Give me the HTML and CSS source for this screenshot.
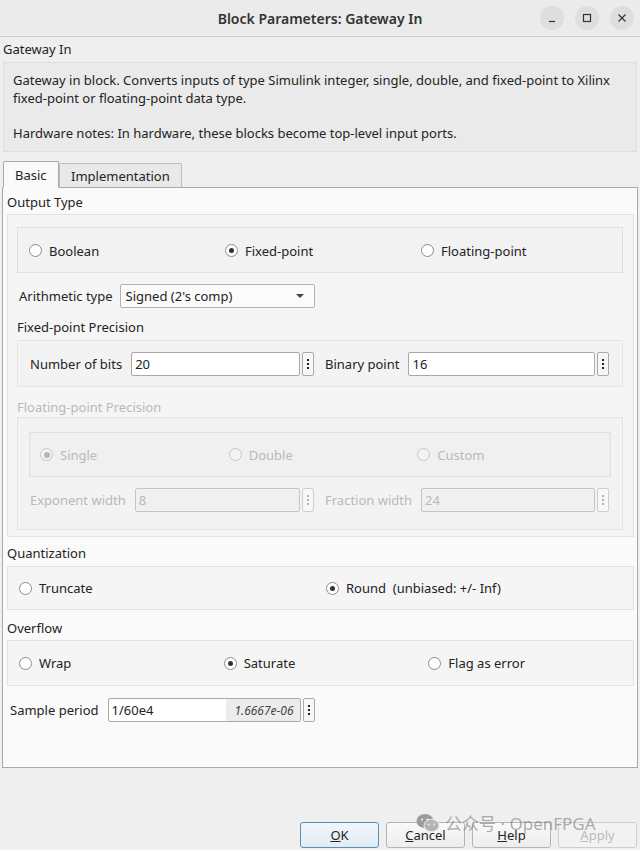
FILE: index.html
```html
<!DOCTYPE html>
<html lang="en">

<head>
    <meta charset="UTF-8">
    <meta name="viewport" content="width=device-width, initial-scale=1.0">
    <title>Block Parameters: Gateway In</title>
    <link rel="stylesheet" href="styles.css">
</head>

<body>
    <div class="window">
        <div class="titlebar">
            <span class="title">Block Parameters: Gateway In</span>
            <div class="wm-buttons">
                <span class="wm-btn">
                    <svg width="10" height="10" viewBox="0 0 10 10"><path d="M2 8.5h6" stroke="#333" stroke-width="1.2"/></svg>
                </span>
                <span class="wm-btn">
                    <svg width="10" height="10" viewBox="0 0 10 10"><rect x="1.5" y="1.5" width="7" height="7" fill="none" stroke="#333" stroke-width="1.2"/></svg>
                </span>
                <span class="wm-btn">
                    <svg width="10" height="10" viewBox="0 0 10 10"><path d="M1.5 1.5l7 7M8.5 1.5l-7 7" stroke="#333" stroke-width="1.2"/></svg>
                </span>
            </div>
        </div>

        <div class="content">
            <div class="block-name">Gateway In</div>
            <div class="description">
                <p>Gateway in block. Converts inputs of type Simulink integer, single, double, and fixed-point to Xilinx fixed-point or floating-point data type.</p>
                <p>Hardware notes: In hardware, these blocks become top-level input ports.</p>
            </div>

            <div class="tabs">
                <span class="tab active">Basic</span>
                <span class="tab">Implementation</span>
            </div>

            <div class="tab-panel">
                <div class="section-label">Output Type</div>
                <div class="group outer">
                    <div class="radio-row cols-3">
                        <label class="radio"><span class="dot"></span>Boolean</label>
                        <label class="radio"><span class="dot checked"></span>Fixed-point</label>
                        <label class="radio"><span class="dot"></span>Floating-point</label>
                    </div>

                    <div class="field-row arith">
                        <span class="field-label">Arithmetic type</span>
                        <div class="combo">
                            <span>Signed (2's comp)</span>
                            <svg width="8" height="4" viewBox="0 0 8 4"><path d="M0 0h8L4 4z" fill="#444"/></svg>
                        </div>
                    </div>

                    <div class="sub-label">Fixed-point Precision</div>
                    <div class="group inner precision">
                        <div class="pair">
                            <span class="field-label">Number of bits</span>
                            <div class="edit">20</div>
                            <span class="spin"><i></i><i></i><i></i></span>
                        </div>
                        <div class="pair">
                            <span class="field-label">Binary point</span>
                            <div class="edit">16</div>
                            <span class="spin"><i></i><i></i><i></i></span>
                        </div>
                    </div>

                    <div class="sub-label disabled">Floating-point Precision</div>
                    <div class="group inner floating disabled">
                        <div class="radio-row cols-3 nested">
                            <label class="radio"><span class="dot checked"></span>Single</label>
                            <label class="radio"><span class="dot"></span>Double</label>
                            <label class="radio"><span class="dot"></span>Custom</label>
                        </div>
                        <div class="pair-row">
                            <div class="pair">
                                <span class="field-label">Exponent width</span>
                                <div class="edit">8</div>
                                <span class="spin"><i></i><i></i><i></i></span>
                            </div>
                            <div class="pair">
                                <span class="field-label">Fraction width</span>
                                <div class="edit">24</div>
                                <span class="spin"><i></i><i></i><i></i></span>
                            </div>
                        </div>
                    </div>
                </div>

                <div class="section-label quant">Quantization</div>
                <div class="group radio-row cols-2 quant-box">
                    <label class="radio"><span class="dot"></span>Truncate</label>
                    <label class="radio"><span class="dot checked"></span>Round&nbsp; (unbiased: +/- Inf)</label>
                </div>

                <div class="section-label overflow">Overflow</div>
                <div class="group radio-row cols-3 overflow-box">
                    <label class="radio"><span class="dot"></span>Wrap</label>
                    <label class="radio"><span class="dot checked"></span>Saturate</label>
                    <label class="radio"><span class="dot"></span>Flag as error</label>
                </div>

                <div class="field-row sample">
                    <span class="field-label">Sample period</span>
                    <div class="edit period">
                        <span class="expr">1/60e4</span>
                        <span class="value">1.6667e-06</span>
                    </div>
                    <span class="spin"><i></i><i></i><i></i></span>
                </div>
            </div>
        </div>

        <div class="button-row">
            <button class="btn default"><u>O</u>K</button>
            <button class="btn"><u>C</u>ancel</button>
            <button class="btn"><u>H</u>elp</button>
            <button class="btn" disabled><u>A</u>pply</button>
        </div>

        <!-- account stamp laid over the buttons -->
        <div class="stamp">
            <svg width="24" height="20" viewBox="0 0 24 20">
                <ellipse cx="9" cy="8" rx="8.5" ry="7" fill="#9a9a9a"/>
                <ellipse cx="15.5" cy="12.5" rx="7.5" ry="6.2" fill="#b4b4b4" stroke="#efefef" stroke-width="1"/>
                <circle cx="6" cy="6.5" r="1.1" fill="#efefef"/>
                <circle cx="11.5" cy="6.5" r="1.1" fill="#efefef"/>
                <circle cx="13" cy="11.5" r="0.9" fill="#efefef"/>
                <circle cx="18" cy="11.5" r="0.9" fill="#efefef"/>
            </svg>
            <span>公众号 · OpenFPGA</span>
        </div>
    </div>
</body>

</html>
```

FILE: styles.css
```css
body {
    margin: 0;
    font-family: "Noto Sans", "Noto Sans CJK SC", sans-serif;
    font-size: 13px;
    color: #232323;
    background-color: #efefef;
}

.window {
    position: relative;
    width: 640px;
    height: 850px;
    display: flex;
    flex-direction: column;
    background-color: #efefef;
}

/* Title bar */
.titlebar {
    height: 36px;
    flex-shrink: 0;
    display: flex;
    align-items: center;
    justify-content: center;
    position: relative;
    background-color: #ebebeb;
    border-bottom: 1px solid #cdcdcd;
}

.title {
    font-size: 14px;
    font-weight: 600;
    color: #333;
}

.wm-buttons {
    position: absolute;
    right: 6px;
    top: 6px;
    display: flex;
    gap: 11px;
}

.wm-btn {
    width: 24px;
    height: 24px;
    border-radius: 50%;
    background-color: #dedede;
    display: flex;
    align-items: center;
    justify-content: center;
}

/* Header + help text */
.content {
    padding: 0 2px;
}

.block-name {
    margin-top: 3px;
    padding-left: 1px;
    line-height: 18px;
}

.description {
    margin: 4px 1px 0;
    padding: 8px 9px 9px;
    background-color: #eaeaea;
    border: 1px solid #dedede;
    line-height: 18px;
}

.description p {
    margin: 0;
}

.description p + p {
    margin-top: 17px;
}

/* Tabs */
.tabs {
    margin-top: 9px;
    display: flex;
    align-items: flex-end;
    height: 27px;
    margin-bottom: -1px;
    position: relative;
    z-index: 1;
}

.tab {
    box-sizing: border-box;
    height: 25px;
    padding: 0 11px;
    display: flex;
    align-items: center;
    background-color: #e9e9e9;
    border: 1px solid #bdbdbd;
    border-bottom: 1px solid #a9a9a9;
    border-radius: 2px 2px 0 0;
}

.tab.active {
    height: 27px;
    width: 56px;
    margin-left: 1px;
    padding: 0 11px;
    background-color: #fafafa;
    border-color: #a9a9a9;
    border-bottom-color: #fafafa;
}

.tab-panel {
    box-sizing: border-box;
    height: 581px;
    padding: 5px 3px 0 4px;
    background-color: #fafafa;
    border: 1px solid #a9a9a9;
}

/* Group boxes */
.section-label,
.sub-label {
    line-height: 18px;
}

.disabled,
.disabled .field-label,
.disabled .radio {
    color: #b9b9b9;
}

.group {
    box-sizing: border-box;
    border: 1px solid #e3e3e3;
    background-color: #f5f5f5;
}

.outer {
    margin-top: 3px;
    padding: 12px 10px 6px 9px;
}

.inner {
    background-color: #f3f3f3;
}

.radio-row {
    display: grid;
    align-items: center;
}

.cols-3 {
    grid-template-columns: repeat(3, 1fr);
}

.cols-2 {
    grid-template-columns: repeat(2, 1fr);
}

.outer > .radio-row {
    height: 46px;
    box-sizing: border-box;
    padding: 1px 5px 0 11px;
    border: 1px solid #e0e0e0;
    background-color: #f2f2f2;
}

.radio {
    display: flex;
    align-items: center;
    gap: 7px;
}

.dot {
    width: 13px;
    height: 13px;
    box-sizing: border-box;
    border: 1px solid #8c8c8c;
    border-radius: 50%;
    background-color: #fff;
    display: flex;
    align-items: center;
    justify-content: center;
}

.dot.checked::after {
    content: "";
    width: 5px;
    height: 5px;
    border-radius: 50%;
    background-color: #333;
}

.disabled .dot {
    border-color: #c6c6c6;
    background-color: #f3f3f3;
}

.disabled .dot.checked::after {
    width: 6px;
    height: 6px;
    background-color: #b5b5b5;
}

/* Fields */
.field-row {
    display: flex;
    align-items: center;
    height: 24px;
}

.arith {
    margin-top: 11px;
    padding-left: 2px;
}

.field-label {
    white-space: nowrap;
}

.combo {
    box-sizing: border-box;
    width: 195px;
    height: 24px;
    margin-left: 7px;
    padding: 0 10px 0 5px;
    display: flex;
    align-items: center;
    justify-content: space-between;
    background-color: #fbfbfb;
    border: 1px solid #b1b1b1;
    border-radius: 2px;
}

.sub-label {
    margin-top: 10px;
}

.precision {
    margin-top: 4px;
    padding: 11px 13px 10px 12px;
    display: grid;
    grid-template-columns: 1fr 1fr;
    column-gap: 11px;
}

.pair {
    display: flex;
    align-items: center;
    height: 24px;
}

.pair .field-label {
    margin-right: 9px;
}

.edit {
    box-sizing: border-box;
    flex: 1;
    height: 24px;
    padding: 0 3px;
    display: flex;
    align-items: center;
    background-color: #fff;
    border: 1px solid #a9a9a9;
    border-radius: 2px;
}

.disabled .edit {
    background-color: #f0f0f0;
    border-color: #c4c4c4;
    color: #b9b9b9;
}

/* the "⋮" button next to each edit box */
.spin {
    box-sizing: border-box;
    width: 12px;
    height: 24px;
    margin-left: 2px;
    display: flex;
    flex-direction: column;
    align-items: center;
    justify-content: center;
    gap: 2px;
    background-color: #f7f7f7;
    border: 1px solid #a9a9a9;
    border-radius: 2px;
}

.spin i {
    width: 2px;
    height: 2px;
    background-color: #222;
}

.disabled .spin {
    border-color: #cfcfcf;
}

.disabled .spin i {
    background-color: #b0b0b0;
}

.sub-label.disabled {
    margin-top: 11px;
}

.floating {
    margin-top: 1px;
    padding: 14px 11px 17px 11px;
}

.nested {
    height: 45px;
    box-sizing: border-box;
    padding: 0 4px 0 10px;
    border: 1px solid #e0e0e0;
    background-color: #f0f0f0;
}

.pair-row {
    margin-top: 11px;
    display: grid;
    grid-template-columns: 1fr 1fr;
    column-gap: 11px;
    padding-left: 1px;
    padding-right: 2px;
}

.floating .pair .field-label {
    margin-right: 9px;
}

.section-label.quant {
    margin-top: 7px;
}

.quant-box,
.overflow-box {
    padding: 0 0 0 11px;
}

.quant-box {
    margin-top: 4px;
    height: 44px;
}

.section-label.overflow {
    margin-top: 9px;
}

.overflow-box {
    margin-top: 3px;
    height: 46px;
}

.sample {
    margin-top: 12px;
    padding-left: 3px;
}

.sample .field-label {
    margin-right: 9px;
}

.period {
    flex: 0 0 193px;
    padding: 0;
    overflow: hidden;
}

.period .expr {
    flex: 1;
    padding-left: 3px;
}

.period .value {
    height: 100%;
    width: 74px;
    padding-right: 6px;
    box-sizing: border-box;
    display: flex;
    align-items: center;
    justify-content: flex-end;
    background-color: #ececec;
    font-style: italic;
    font-size: 12px;
    color: #444;
}

/* Dialog buttons */
.button-row {
    margin-top: auto;
    margin-bottom: 2px;
    padding-right: 3px;
    display: flex;
    justify-content: flex-end;
    gap: 7px;
}

.btn {
    width: 79px;
    height: 26px;
    font-family: inherit;
    font-size: 13px;
    color: #232323;
    background: linear-gradient(#f9f9f9, #ededed);
    border: 1px solid #b4b4b4;
    border-radius: 3px;
}

.btn.default {
    border-color: #5b8fb8;
    background: linear-gradient(#f1f6fb, #e2ebf4);
}

.btn:disabled {
    color: #bcbcbc;
    border-color: #cecece;
    background: #f2f2f2;
}

.stamp {
    position: absolute;
    left: 416px;
    top: 810px;
    display: flex;
    align-items: center;
    gap: 5px;
    font-size: 17px;
    color: rgba(120, 120, 120, 0.6);
    pointer-events: none;
}
```
